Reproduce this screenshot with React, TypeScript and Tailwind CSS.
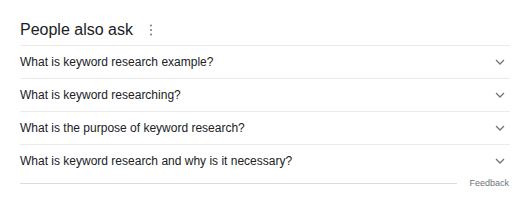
import React from "react";

const questions = [
  "What is keyword research example?",
  "What is keyword researching?",
  "What is the purpose of keyword research?",
  "What is keyword research and why is it necessary?",
];

function Chevron() {
  return (
    <svg width="10" height="6" viewBox="0 0 10 6" className="shrink-0">
      <polyline
        points="1,1 5,5 9,1"
        fill="none"
        stroke="#70757a"
        strokeWidth="1.3"
      />
    </svg>
  );
}

function Dots() {
  return (
    <svg width="6" height="14" viewBox="0 0 6 14" className="shrink-0">
      <circle cx="3" cy="2.5" r="1.1" fill="#80868b" />
      <circle cx="3" cy="7" r="1.1" fill="#80868b" />
      <circle cx="3" cy="11.5" r="1.1" fill="#80868b" />
    </svg>
  );
}

export default function App() {
  return (
    <div
      className="w-[523px] h-[203px] bg-white pl-[20px]"
      style={{ fontFamily: '"Liberation Sans", Arial, sans-serif' }}
    >
      <div className="w-[490px]">
        <div className="flex items-center h-[45px] pt-[20px] pb-[5px]">
          <span className="text-[16px] leading-[20px] text-[#202124]">
            People also ask
          </span>
          <span className="ml-[15px] flex items-center">
            <Dots />
          </span>
        </div>
        {questions.map((q, i) => (
          <div
            key={q}
            className={
              i === questions.length - 1
                ? "border-t border-[#ebebeb] h-[39px] pb-[6px] flex items-center justify-between"
                : "border-t border-[#ebebeb] h-[33px] flex items-center justify-between"
            }
          >
            <span className="text-[12px] leading-[32px] text-[#202124]">
              {q}
            </span>
            <span className="mr-[5px] flex items-center">
              <Chevron />
            </span>
          </div>
        ))}
        <div className="flex items-center h-[8px] -mt-[4px]">
          <div className="flex-1 h-px bg-[#dadce0]" />
          <span className="ml-[12px] mr-[1px] text-[9px] leading-[10px] text-[#70757a]">
            Feedback
          </span>
        </div>
      </div>
    </div>
  );
}
